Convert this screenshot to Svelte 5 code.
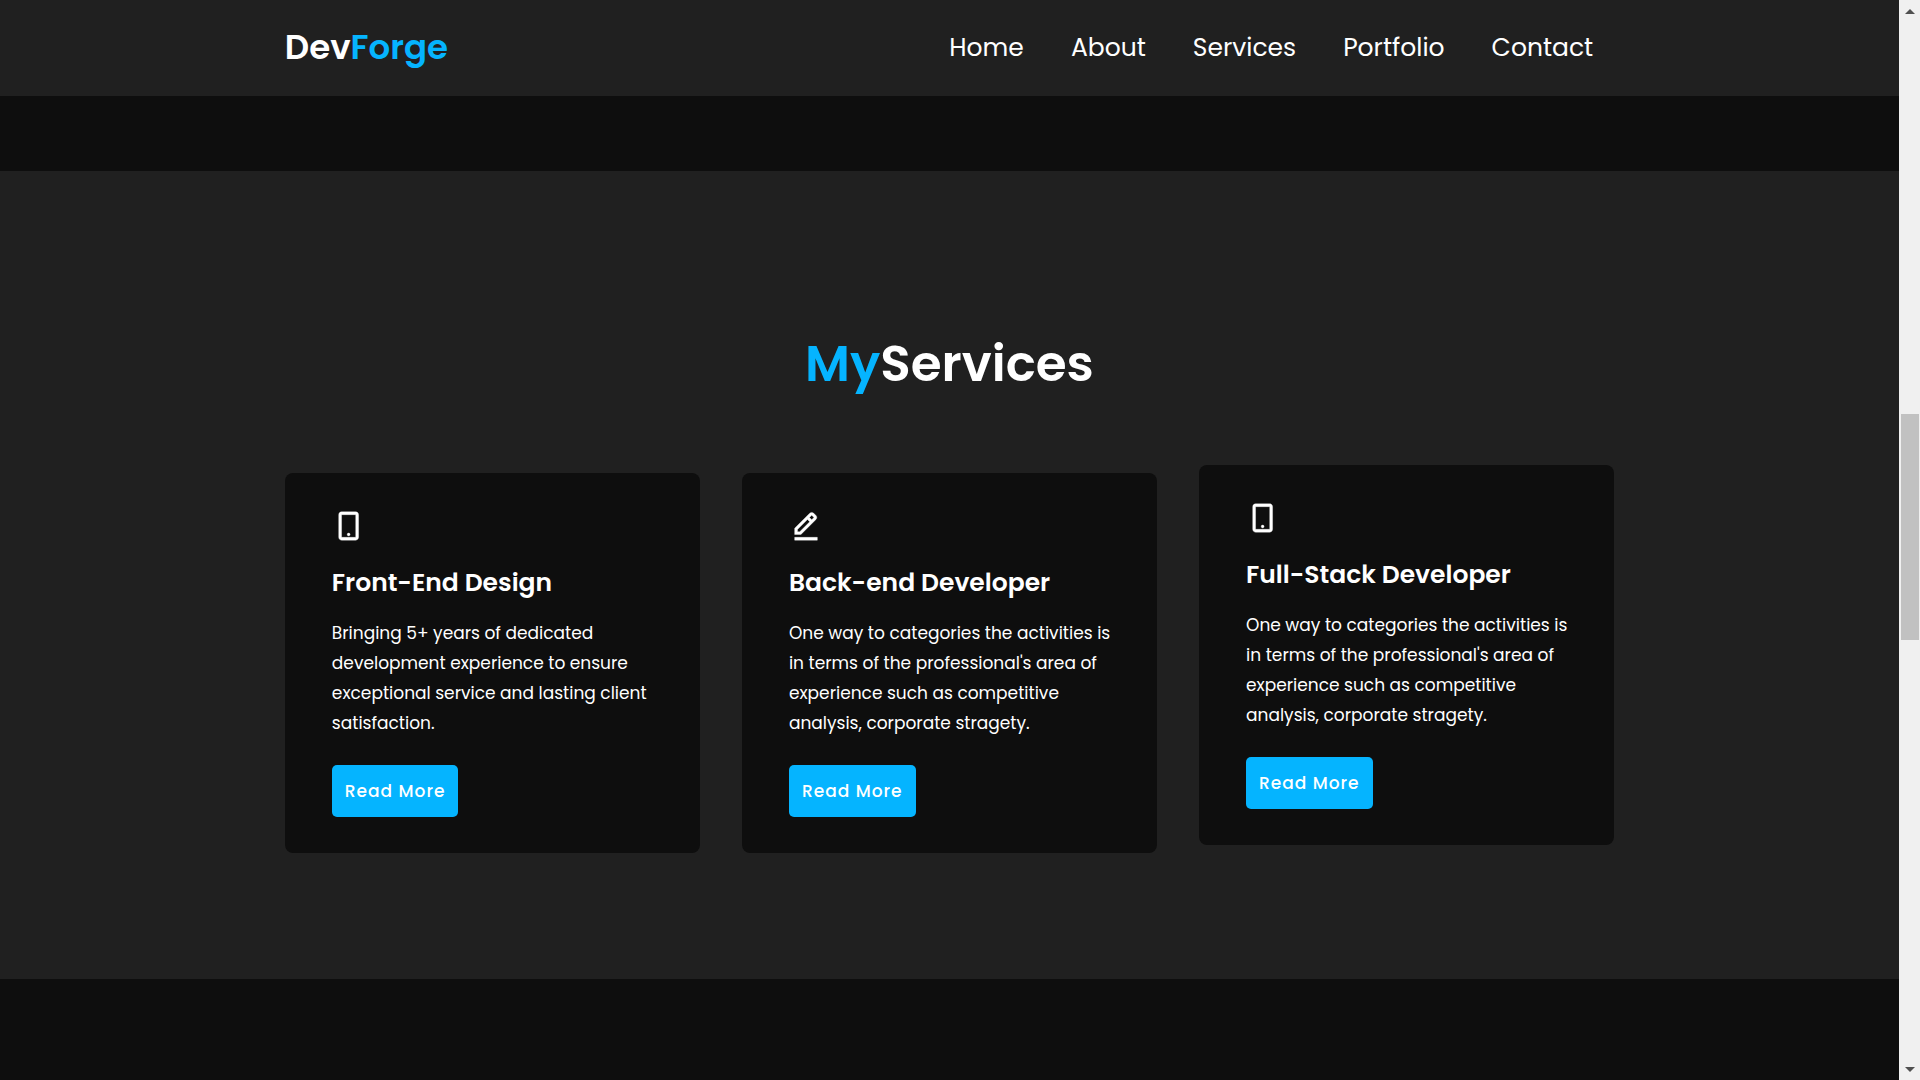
<script>
  const links = ['Home', 'About', 'Services', 'Portfolio', 'Contact'];

  const services = [
    {
      icon: 'mobile',
      title: 'Front-End Design',
      lines: ['Bringing 5+ years of dedicated', 'development experience to ensure', 'exceptional service and lasting client', 'satisfaction.'],
      raised: false
    },
    {
      icon: 'edit',
      title: 'Back-end Developer',
      lines: ['One way to categories the activities is', "in terms of the professional's area of", 'experience such as competitive', 'analysis, corporate stragety.'],
      raised: false
    },
    {
      icon: 'mobile',
      title: 'Full-Stack Developer',
      lines: ['One way to categories the activities is', "in terms of the professional's area of", 'experience such as competitive', 'analysis, corporate stragety.'],
      raised: true
    }
  ];
</script>

<div class="window">
  <div class="page">
    <header class="header">
      <a href="#home" class="logo">Dev<span class="accent">Forge</span></a>
      <nav class="nav">
        {#each links as link}
          <a href={'#' + link.toLowerCase()}>{link}</a>
        {/each}
      </nav>
    </header>

    <main>
      <section class="services" id="services">
        <h2 class="heading"><span class="accent">My</span>Services</h2>
        <div class="cards">
          {#each services as service}
            <article class="card" class:raised={service.raised}>
              <svg class="icon" viewBox="0 0 24 24" aria-hidden="true">
                {#if service.icon === 'mobile'}
                  <path d="M16.75 2h-10c-1.103 0-2 .897-2 2v16c0 1.103.897 2 2 2h10c1.103 0 2-.897 2-2V4c0-1.103-.897-2-2-2zm-10 18V4h10l.002 16H6.75z" />
                  <circle cx="11.75" cy="18" r="1" />
                {:else}
                  <path d="M19.045 7.401c.378-.378.586-.88.586-1.414s-.208-1.036-.586-1.414l-1.586-1.586c-.378-.378-.88-.586-1.414-.586s-1.036.208-1.413.585L4 13.585V18h4.413L19.045 7.401zm-3-3 1.587 1.585-1.59 1.584-1.586-1.585 1.589-1.584zM6 16v-1.585l7.04-7.018 1.586 1.586L7.587 16H6zm-2 4h16v2H4z" />
                {/if}
              </svg>
              <h3>{service.title}</h3>
              <p>
                {#each service.lines as line}
                  <span class="line">{line + ' '}</span>
                {/each}
              </p>
              <a href="#read-more" class="btn">Read More</a>
            </article>
          {/each}
        </div>
      </section>
    </main>
  </div>

  <div class="scrollbar" aria-hidden="true">
    <svg class="arrow" viewBox="0 0 10 5"><path d="M5 0l5 5H0z" /></svg>
    <div class="track">
      <div class="before"></div>
      <div class="thumb"></div>
      <div class="after"></div>
    </div>
    <svg class="arrow" viewBox="0 0 10 5"><path d="M0 0h10L5 5z" /></svg>
  </div>
</div>

<style>
  :global(body) {
    margin: 0;
    background: #0e0e0e;
  }

  .window {
    display: grid;
    grid-template-columns: minmax(0, 1fr) 21px;
    min-height: 100vh;
    color: #fff;
    font-family: Poppins, Inter, 'Open Sans', sans-serif;
  }

  a {
    color: inherit;
    text-decoration: none;
  }

  .accent {
    color: #05b4ff;
  }

  .header {
    display: flex;
    align-items: center;
    justify-content: space-between;
    padding: 22px 15% 24px;
    background: #202020;
  }

  .logo {
    font-size: 34px;
    font-weight: 600;
    line-height: 50px;
  }

  .nav {
    display: flex;
    gap: 47px;
    padding-right: 21px;
    font-size: 25px;
    line-height: 41px;
  }

  .services {
    margin-top: 75px;
    padding: 155px 15% 126px;
    background: #202020;
  }

  .heading {
    margin: 0 0 72px;
    font-size: 50px;
    font-weight: 600;
    line-height: 75px;
    text-align: center;
  }

  .cards {
    display: grid;
    grid-template-columns: repeat(3, minmax(0, 1fr));
    gap: 42px;
  }

  .card {
    display: flex;
    flex-direction: column;
    align-items: flex-start;
    box-sizing: border-box;
    padding: 36px 47px;
    border-radius: 8px;
    background: #0e0e0e;
  }

  .raised {
    transform: translateY(-8px);
  }

  .icon {
    width: 34px;
    height: 34px;
    fill: #fff;
    stroke: #fff;
    stroke-width: 0.25;
  }

  h3 {
    margin: 20px 0 16px;
    font-size: 25px;
    font-weight: 600;
    line-height: 39px;
    white-space: nowrap;
  }

  p {
    margin: 0 0 27px;
    font-size: 17px;
    line-height: 30px;
  }

  .line {
    display: block;
    white-space: nowrap;
  }

  .btn {
    padding: 0 13px;
    border-radius: 5px;
    background: #05b4ff;
    font-size: 17px;
    font-weight: 500;
    letter-spacing: 1px;
    line-height: 52px;
  }

  .scrollbar {
    display: flex;
    flex-direction: column;
    align-items: center;
    box-sizing: border-box;
    padding: 9px 0 8px;
    background: #f0f0f0;
  }

  .arrow {
    width: 10px;
    height: 5px;
    fill: #505050;
  }

  .track {
    display: flex;
    flex: 1;
    flex-direction: column;
    width: 18px;
    padding: 7px 0;
  }

  .before {
    flex: 393;
  }

  .thumb {
    flex: 226;
    background: #c1c1c1;
  }

  .after {
    flex: 420;
  }
</style>
